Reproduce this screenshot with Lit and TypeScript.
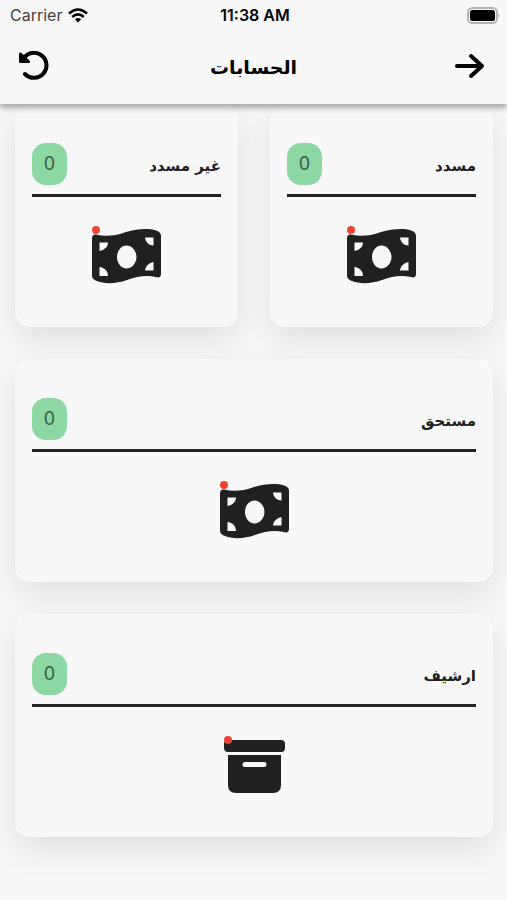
import { LitElement, html, css, svg } from "lit";
import { customElement, property } from "lit/decorators.js";

type IconName = "money" | "archive";

const icons = {
  money: svg`
    <path fill-rule="evenodd" d="M0 11C0 8 1 6 4 6.500C13 9 23 8 34 4C45 1 56 0 64 2.500C67 3.500 69 5 69 8V46C69 49 67 50 64 49C54 47 46 48 35 52C24 56 12 56 5 53C1 51.500 0 50 0 47ZM34.500 17.500C29 17.500 25 23 25 29C25 35 29 40.500 34.500 40.500C40 40.500 44.500 35 44.500 29C44.500 23 40 17.500 34.500 17.500ZM7.500 14.500V23C12.500 22 16 19 16 14.500ZM53 9.500C53.500 14 57 17.500 61.500 17.500V9.500ZM61.500 34C57 35 53.500 38 53 42.500H61.500ZM7.500 39V48H16C16 43 12.500 39.500 7.500 39Z" />
  `,
  archive: svg`
    <rect x="4" y="2" width="61" height="12" rx="4" />
    <path fill-rule="evenodd" d="M8 17H61V47Q61 55 53 55H16Q8 55 8 47ZM25 24A2 2 0 0 0 25 29H44A2 2 0 0 0 44 24Z" />
  `,
};

@customElement("account-card")
export class AccountCard extends LitElement {
  @property() label = "";
  @property({ type: Number }) count = 0;
  @property() icon: IconName = "money";

  static styles = css`
    :host {
      display: block;
      box-sizing: border-box;
      min-height: 223px;
      padding: 39px 17px 42px;
      border-radius: 14px;
      background: #f8f8f8;
      box-shadow: 0 12px 32px rgba(0, 0, 0, 0.1);
      color: #202020;
    }
    .head {
      display: flex;
      align-items: center;
      justify-content: space-between;
      padding-bottom: 9px;
      border-bottom: 3px solid #252325;
    }
    .label {
      margin: 0;
      padding-top: 4px;
      font-size: 15px;
      line-height: 24px;
      font-weight: 700;
    }
    .count {
      width: 35px;
      border-radius: 14px;
      background: #8cd7a3;
      font: 18px/42px "Inter", sans-serif;
      color: #3a5c45;
      text-align: center;
    }
    .picture {
      display: block;
      width: 69px;
      height: 56px;
      margin: 31px auto 0;
      overflow: visible;
      fill: #202020;
    }
    .dot {
      fill: #f44336;
    }
  `;

  render() {
    return html`
      <div class="head">
        <h2 class="label">${this.label}</h2>
        <span class="count">${this.count}</span>
      </div>
      <svg class="picture" viewBox="0 0 69 56" aria-hidden="true">
        ${icons[this.icon]}
        <circle class="dot" cx=${this.icon === "archive" ? 8 : 4} cy="2" r="4" />
      </svg>
    `;
  }
}

@customElement("app-root")
export class AppRoot extends LitElement {
  static styles = css`
    :host {
      display: block;
      min-height: 100vh;
      background: #f8f8f8;
      color: #000;
      font-family: "DejaVu Sans", sans-serif;
      direction: rtl;
    }
    .top {
      position: relative;
      z-index: 1;
      background: #f8f8f8;
      box-shadow: 0 4px 6px rgba(0, 0, 0, 0.32);
    }
    .status {
      display: grid;
      grid-template-columns: 1fr auto 1fr;
      align-items: center;
      direction: ltr;
      height: 30px;
      padding: 0 7px 0 10px;
      font: 16px/30px "Inter", sans-serif;
    }
    .carrier {
      display: flex;
      align-items: center;
      gap: 6px;
      color: #444;
    }
    .time {
      font-weight: 600;
    }
    .battery {
      justify-self: end;
    }
    .bar {
      display: flex;
      align-items: center;
      justify-content: space-between;
      height: 74px;
      padding: 0 18px;
    }
    .title {
      margin: 0;
      font-size: 19px;
      line-height: 32px;
      font-weight: 700;
    }
    .action {
      display: block;
      padding: 0 0 3px;
      border: 0;
      background: none;
      color: inherit;
      cursor: pointer;
    }
    .action svg {
      display: block;
      fill: none;
      stroke: currentColor;
      stroke-width: 4;
      stroke-linecap: round;
      stroke-linejoin: round;
    }
    .cards {
      display: grid;
      grid-template-columns: 1fr 1fr;
      gap: 32px;
      padding: 0 14px 62px 15px;
    }
    .wide {
      grid-column: 1 / -1;
    }
  `;

  render() {
    return html`
      <header class="top">
        <div class="status">
          <span class="carrier">
            Carrier
            <svg width="20" height="15" viewBox="0 0 20 15" fill="none" stroke="#000" stroke-width="2.600" aria-hidden="true">
              <path d="M1 5.500Q10 -2.500 19 5.500M4.200 9Q10 3.800 15.800 9" />
              <path d="M6.800 11.200Q10 8.600 13.200 11.200L10 14.500Z" fill="#000" stroke="none" />
            </svg>
          </span>
          <span class="time">11:38 AM</span>
          <svg class="battery" width="33" height="17" viewBox="0 0 33 17" aria-hidden="true">
            <rect x="1" y="1" width="29" height="15" rx="4.500" fill="none" stroke="#b4b4b4" stroke-width="2" />
            <rect x="3" y="3" width="25" height="11" rx="2.500" />
            <path d="M31.500 6Q33.500 8.500 31.500 11Z" fill="#b4b4b4" />
          </svg>
        </div>
        <div class="bar">
          <button class="action" aria-label="رجوع">
            <svg width="40" height="30" viewBox="0 0 40 30">
              <path d="M8 15H33M22 5L33 15L22 25" />
            </svg>
          </button>
          <h1 class="title">الحسابات</h1>
          <button class="action" aria-label="تحديث">
            <svg width="40" height="30" viewBox="0 0 40 30">
              <path d="M7 23A12.500 12.500 0 1 0 5.500 7.500" />
              <path fill="currentColor" stroke-width="3" d="M2.500 3V10.500H10.500Z" />
            </svg>
          </button>
        </div>
      </header>
      <main class="cards">
        <account-card label="مسدد"></account-card>
        <account-card label="غير مسدد"></account-card>
        <account-card class="wide" label="مستحق"></account-card>
        <account-card class="wide" label="ارشيف" icon="archive"></account-card>
      </main>
    `;
  }
}
